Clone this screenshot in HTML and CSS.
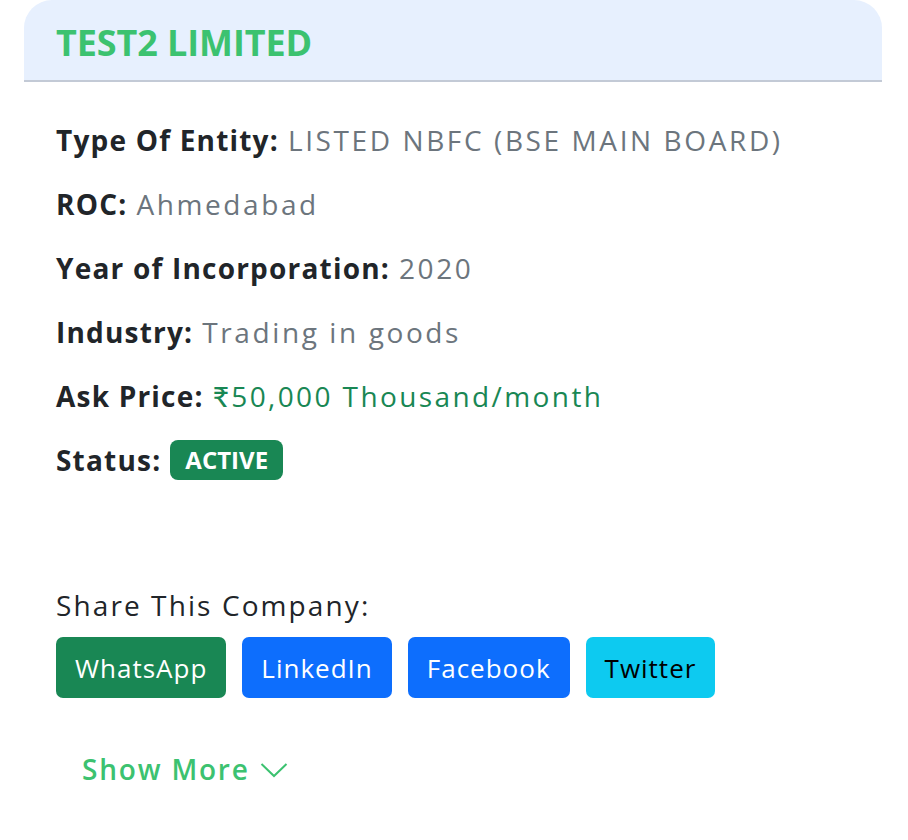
FILE: index.html
```html
<!DOCTYPE html>
<html lang="en">
<head>
<meta charset="utf-8">
<title>TEST2 LIMITED</title>
<link rel="stylesheet" href="styles.css">
</head>
<body>
<div class="card">
  <div class="card-header">
    <h2 class="title">TEST2 LIMITED</h2>
  </div>
  <div class="card-body">
    <p class="row"><span class="label">Type Of Entity:</span> <span class="value">LISTED NBFC (BSE MAIN BOARD)</span></p>
    <p class="row"><span class="label">ROC:</span> <span class="value">Ahmedabad</span></p>
    <p class="row"><span class="label">Year of Incorporation:</span> <span class="value">2020</span></p>
    <p class="row"><span class="label">Industry:</span> <span class="value">Trading in goods</span></p>
    <p class="row"><span class="label">Ask Price:</span> <span class="value price">₹50,000 Thousand/month</span></p>
    <p class="row"><span class="label">Status:</span> <span class="badge">ACTIVE</span></p>

    <p class="share-label">Share This Company:</p>
    <div class="share-buttons">
      <a class="btn btn-whatsapp">WhatsApp</a>
      <a class="btn btn-blue">LinkedIn</a>
      <a class="btn btn-blue">Facebook</a>
      <a class="btn btn-twitter">Twitter</a>
    </div>

    <button class="show-more">Show More
      <svg class="chev" width="28" height="16" viewBox="0 0 28 16"><path d="M1.5 2 L14 14 L26.5 2" fill="none" stroke="currentColor" stroke-width="2"/></svg>
    </button>
  </div>
</div>
</body>
</html>
```
FILE: styles.css
```css
* { box-sizing: border-box; }
body {
  margin: 0;
  background: #fff;
  font-family: "Open Sans", Lato, sans-serif;
  color: #212529;
}
.card {
  margin: 0 26px 0 24px;
  background: #fff;
}
.card-header {
  height: 82px;
  background: #e7f0fe;
  border-radius: 28px 28px 0 0;
  border-bottom: 2px solid #c3cad6;
  padding-left: 32px;
  display: flex;
  align-items: center;
}
.title {
  margin: 0;
  padding-top: 4px;
  font-family: "Open Sans", sans-serif;
  font-weight: 700;
  font-size: 36px;
  color: #3cc270;
  letter-spacing: -0.1px;
}
.card-body {
  padding: 38px 32px 0;
}
.row {
  margin: 0 0 24px;
  font-size: 28px;
  line-height: 40px;
  height: 40px;
  display: flex;
  align-items: center;
  white-space: nowrap;
}
.label {
  font-weight: 700;
  letter-spacing: 1.2px;
  margin-right: 9px;
}
.value {
  font-weight: 400;
  color: #6c757d;
  letter-spacing: 2.6px;
}
.value.price { color: #198754; font-weight: 500; letter-spacing: 2.4px; }
.badge {
  display: inline-flex;
  align-items: center;
  height: 40px;
  padding: 0 15px;
  background: #198754;
  color: #fff;
  border-radius: 8px;
  font-family: "Open Sans", sans-serif;
  font-weight: 700;
  font-size: 24px;
}
.share-label {
  margin: 105px 0 12px;
  font-size: 28px;
  line-height: 40px;
  font-weight: 500;
  letter-spacing: 2.1px;
}
.share-buttons {
  display: flex;
  gap: 16px;
}
.btn {
  display: inline-flex;
  align-items: center;
  height: 61px;
  padding: 0 19px;
  border-radius: 7px;
  font-size: 26px;
  letter-spacing: 1px;
  color: #fff;
}
.btn-whatsapp { background: #198754; }
.btn-blue { background: #0d6efd; }
.btn-twitter { background: #0dcaf0; color: #000; }
.show-more {
  margin: 51px 0 0 26px;
  padding: 0;
  border: 0;
  background: none;
  font-family: inherit;
  font-size: 28px;
  font-weight: 600;
  letter-spacing: 1.8px;
  color: #3cc270;
  line-height: 40px;
  display: inline-flex;
  align-items: center;
  gap: 10px;
}
.chev { margin-top: 2px; }
```
